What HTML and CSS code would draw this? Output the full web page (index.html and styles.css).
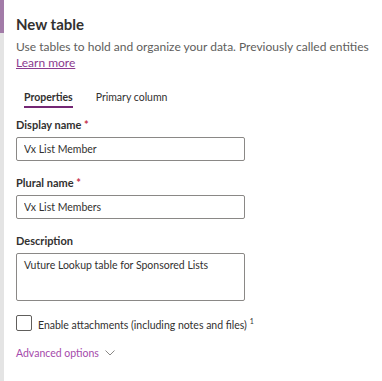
FILE: index.html
```html
<!DOCTYPE html>
<html lang="en">

<head>
    <meta charset="UTF-8">
    <meta name="viewport" content="width=device-width, initial-scale=1.0">
    <title>New table</title>
    <link rel="stylesheet" href="styles.css">
</head>

<body>
    <div class="shell">
        <div class="rail">
            <div class="rail-top"></div>
        </div>
        <div class="panel">
            <h2 class="title">New table</h2>
            <p class="subtitle">Use tables to hold and organize your data. Previously called entities</p>
            <a class="learn" href="#">Learn more</a>

            <div class="tabs">
                <span class="tab active">Properties</span>
                <span class="tab">Primary column</span>
            </div>

            <div class="field">
                <label class="label">Display name <span class="req">*</span></label>
                <input class="input" type="text" value="Vx List Member">
            </div>
            <div class="field">
                <label class="label">Plural name <span class="req">*</span></label>
                <input class="input" type="text" value="Vx List Members">
            </div>
            <div class="field">
                <label class="label">Description</label>
                <textarea class="input area">Vuture Lookup table for Sponsored Lists</textarea>
            </div>

            <div class="check-row">
                <span class="box"></span>
                <span class="check-text">Enable attachments (including notes and files) <sup>1</sup></span>
            </div>

            <div class="advanced">
                Advanced options
                <svg width="10" height="6" viewBox="0 0 10 6">
                    <path d="M0.5 0.5 L5 5 L9.5 0.5" fill="none" stroke="#8a8886" stroke-width="1"></path>
                </svg>
            </div>
        </div>
    </div>
</body>

</html>
```

FILE: styles.css
```css
* {
    margin: 0;
    padding: 0;
    box-sizing: border-box;
}

body {
    background: #fff;
    font-family: Lato, "Open Sans", sans-serif;
    font-size: 10.5px;
    color: #323130;
    width: 382px;
    height: 381px;
    overflow: hidden;
}

.shell {
    display: flex;
    height: 381px;
}

.rail {
    width: 4px;
    background: #e4e4e4;
    flex-shrink: 0;
}

.rail-top {
    height: 33px;
    background: #a27ba8;
}

.panel {
    padding: 13px 0 0 12px;
    flex: 1;
}

.title {
    font-size: 15px;
    font-weight: 700;
    line-height: 22px;
    color: #323130;
}

.subtitle {
    margin-top: 4px;
    font-size: 12px;
    line-height: 16px;
    color: #605e5c;
    white-space: nowrap;
}

.learn {
    display: block;
    width: fit-content;
    font-size: 12px;
    line-height: 15px;
    color: #8b3a8f;
    text-decoration: underline;
}

.tabs {
    display: flex;
    gap: 23px;
    margin: 19px 0 0 8px;
}

.tab {
    font-size: 10.5px;
    line-height: 16px;
    padding-bottom: 1px;
    color: #323130;
}

.tab.active {
    font-weight: 700;
    border-bottom: 2px solid #742774;
}

.field {
    margin-top: 15px;
}

.tabs + .field {
    margin-top: 10px;
}

.label {
    display: block;
    font-size: 11px;
    font-weight: 700;
    line-height: 14px;
    margin-bottom: 5px;
}

.req {
    color: #c4314b;
}

.input {
    display: block;
    width: 229px;
    height: 24px;
    border: 1px solid #8a8886;
    border-radius: 2px;
    padding: 0 7px;
    font-family: inherit;
    font-size: 10.5px;
    color: #323130;
    background: #fff;
}

.area {
    height: 48px;
    padding: 5px 7px;
    resize: none;
}

.check-row {
    display: flex;
    align-items: center;
    gap: 6px;
    margin-top: 12px;
}

.box {
    width: 16px;
    height: 16px;
    border: 1px solid #605e5c;
    border-radius: 2px;
}

.check-text {
    font-size: 10.5px;
    line-height: 16px;
    color: #323130;
}

.check-text sup {
    font-size: 7px;
}

.advanced {
    margin-top: 12px;
    font-size: 10.5px;
    line-height: 16px;
    color: #a54aab;
    display: flex;
    align-items: center;
    gap: 6px;
}
```
